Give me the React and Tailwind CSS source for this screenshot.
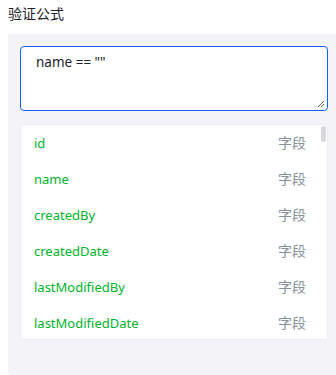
import React from "react";

const fields = ["id", "name", "createdBy", "createdDate", "lastModifiedBy", "lastModifiedDate"];

const App = () => {
  return (
    <div
      className="w-[336px] h-[375px] bg-white overflow-hidden"
      style={{ fontFamily: '"Noto Sans", "Noto Sans CJK SC", sans-serif' }}
    >
      <div className="pl-2 h-[34px] flex items-start pt-[3px] text-[14px] leading-[22px] text-[#1d2129]">验证公式</div>
      <div className="ml-2 h-[341px] bg-[#f4f4f6] rounded-bl-[4px] pt-3 pl-3 pr-2">
        <div className="h-[65px] border border-[#165dff] rounded-[4px] bg-white relative">
          <div className="pl-[15px] pt-[4px] text-[13.5px] leading-[22px] text-[#1d2129]">name == ""</div>
          <svg className="absolute right-[2px] bottom-[2px]" width="8" height="8" viewBox="0 0 8 8">
            <path d="M7 1 L1 7 M7 4 L4 7" stroke="#666" strokeWidth="1" />
          </svg>
        </div>
        <div className="mt-[13px] h-[216px] bg-white rounded-[3px] border border-[#ebedf2] relative overflow-hidden">
          {fields.map((f) => (
            <div key={f} className="h-[36px] flex items-center justify-between pl-[13px] pr-[21px]">
              <span className="text-[#00b42a] text-[13px] leading-[20px]">{f}</span>
              <span className="text-[#86909c] text-[14px] leading-[20px]">字段</span>
            </div>
          ))}
          <div className="absolute right-[1px] top-[1px] w-[5px] h-[16px] rounded-full bg-[#d9d9dc]" />
        </div>
      </div>
    </div>
  );
};

export default App;
